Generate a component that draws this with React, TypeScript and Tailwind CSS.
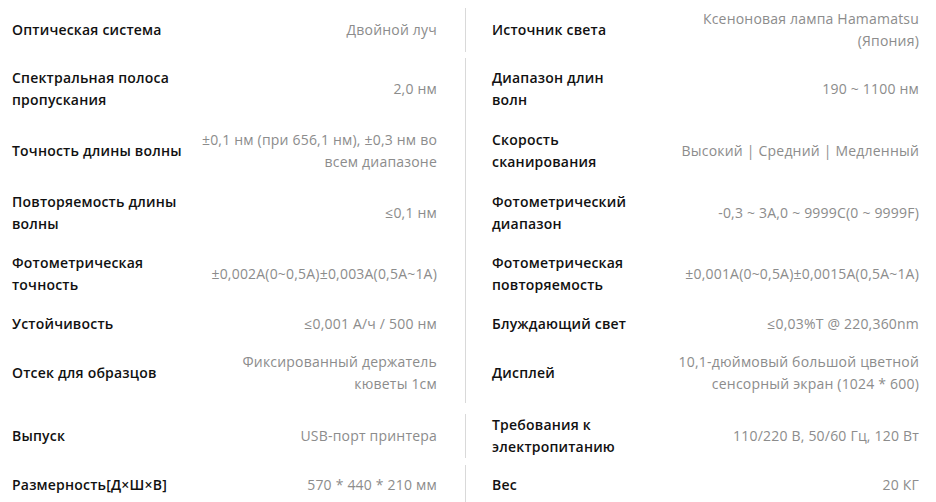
import React from 'react';

type Cell = { label: string[]; value: string[] };
type Row = { h: string; mt: string; left: Cell; right: Cell };

const rows: Row[] = [
  {
    h: 'h-[40px] pb-[2px]',
    mt: 'mt-[8px]',
    left: { label: ['Оптическая система'], value: ['Двойной луч'] },
    right: { label: ['Источник света'], value: ['Ксеноновая лампа Hamamatsu', '(Япония)'] },
  },
  {
    h: 'h-[62px]',
    mt: 'mt-[10px]',
    left: { label: ['Спектральная полоса', 'пропускания'], value: ['2,0 нм'] },
    right: { label: ['Диапазон длин', 'волн'], value: ['190 ~ 1100 нм'] },
  },
  {
    h: 'h-[62px]',
    mt: '',
    left: { label: ['Точность длины волны'], value: ['±0,1 нм (при 656,1 нм), ±0,3 нм во', 'всем диапазоне'] },
    right: { label: ['Скорость', 'сканирования'], value: ['Высокий | Средний | Медленный'] },
  },
  {
    h: 'h-[61px]',
    mt: '',
    left: { label: ['Повторяемость длины', 'волны'], value: ['≤0,1 нм'] },
    right: { label: ['Фотометрический', 'диапазон'], value: ['-0,3 ~ 3A,0 ~ 9999C(0 ~ 9999F)'] },
  },
  {
    h: 'h-[61px]',
    mt: '',
    left: { label: ['Фотометрическая', 'точность'], value: ['±0,002A(0~0,5A)±0,003A(0,5A~1A)'] },
    right: { label: ['Фотометрическая', 'повторяемость'], value: ['±0,001A(0~0,5A)±0,0015A(0,5A~1A)'] },
  },
  {
    h: 'h-[39px]',
    mt: '',
    left: { label: ['Устойчивость'], value: ['≤0,001 A/ч / 500 нм'] },
    right: { label: ['Блуждающий свет'], value: ['≤0,03%T @ 220,360nm'] },
  },
  {
    h: 'h-[60px]',
    mt: '',
    left: { label: ['Отсек для образцов'], value: ['Фиксированный держатель', 'кюветы 1см'] },
    right: { label: ['Дисплей'], value: ['10,1-дюймовый большой цветной', 'сенсорный экран (1024 * 600)'] },
  },
  {
    h: 'h-[40px]',
    mt: 'mt-[11px]',
    left: { label: ['Выпуск'], value: ['USB-порт принтера'] },
    right: { label: ['Требования к', 'электропитанию'], value: ['110/220 В, 50/60 Гц, 120 Вт'] },
  },
  {
    h: 'h-[40px]',
    mt: 'mt-[11px]',
    left: { label: ['Размерность[Д×Ш×В]'], value: ['570 * 440 * 210 мм'] },
    right: { label: ['Вес'], value: ['20 КГ'] },
  },
];

const Lines: React.FC<{ lines: string[]; className: string }> = ({ lines, className }) => (
  <div className={className}>
    {lines.map((l, i) => (
      <div key={i} className="whitespace-nowrap">
        {l}
      </div>
    ))}
  </div>
);

const SpecCell: React.FC<{ cell: Cell; className: string }> = ({ cell, className }) => (
  <div className={`flex items-center justify-between ${className}`}>
    <Lines lines={cell.label} className="font-semibold text-[#111]" />
    <Lines lines={cell.value} className="text-right text-[#8c8c8c]" />
  </div>
);

export default function App() {
  return (
    <div
      className="w-[936px] h-[502px] overflow-hidden bg-white text-[14px] leading-[22px] tracking-[0.2px] flex flex-col"
      style={{ fontFamily: '"Open Sans", "Noto Sans", sans-serif' }}
    >
      {rows.map((r, i) => (
        <div key={i} className={`grid grid-cols-[465px_1fr] shrink-0 ${r.h} ${r.mt}`}>
          <SpecCell cell={r.left} className="pl-[12px] pr-[28px]" />
          <SpecCell cell={r.right} className="border-l border-[#d9d9d9] pl-[26px] pr-[17px]" />
        </div>
      ))}
    </div>
  );
}
